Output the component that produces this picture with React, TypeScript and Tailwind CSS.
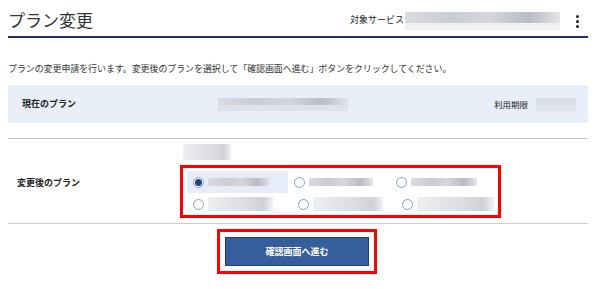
const blur = "bg-[linear-gradient(90deg,#d9dbe0_0%,#c9ccd3_30%,#d4d6dc_55%,#b9bcc4_80%,#e2e4e8_100%)]";
const blurLight = "bg-[linear-gradient(90deg,#eeeff1_0%,#e3e4e7_35%,#dcdde1_60%,#cfd1d5_85%,#f0f1f3_100%)]";

function Radio({ checked }: { checked?: boolean }) {
  return (
    <span className="flex h-[11px] w-[11px] shrink-0 items-center justify-center rounded-full border border-[#8aa0bf] bg-white">
      {checked && <span className="h-[7px] w-[7px] rounded-full bg-[#1e3f86]" />}
    </span>
  );
}

function Option({ checked, w, light }: { checked?: boolean; w: string; light?: boolean }) {
  return (
    <div
      className={`flex h-[22px] items-center gap-[4px] pl-[6px] pr-[4px] ${
        checked ? "bg-[#e6edf8]" : ""
      }`}
    >
      <Radio checked={checked} />
      <div className={`${light ? "h-[14px]" : "h-[8px]"} ${w} ${light ? blurLight : blur}`} />
    </div>
  );
}

export default function App() {
  return (
    <div className="h-[289px] w-[600px] bg-white pl-[8px] pr-[12px] font-['Noto_Sans_CJK_JP','Noto_Sans',sans-serif] text-[#222]">
      {/* === Header === */}
      <div className="flex h-[38px] items-start justify-between border-b-2 border-[#1c2f6b]">
        <h1 className="mt-[9px] text-[17px] leading-[22px] text-[#333]">プラン変更</h1>
        <div className="mt-[12px] flex items-start">
          <span className="mt-[2px] text-[9px] leading-[11px]">対象サービス</span>
          <div className="ml-[1px] flex flex-col">
            <div className={`h-[11px] w-[155px] ${blur}`} />
            <div className="h-[7px] w-[155px] bg-[#f1f2f4]" />
          </div>
          <div className="ml-[16px] mr-[9px] mt-[3px] flex flex-col gap-[2px]">
            <span className="h-[3px] w-[3px] rounded-full bg-[#222]" />
            <span className="h-[3px] w-[3px] rounded-full bg-[#222]" />
            <span className="h-[3px] w-[3px] rounded-full bg-[#222]" />
          </div>
        </div>
      </div>

      {/* === Intro === */}
      <p className="mt-[25px] text-[9px] leading-[12px] tracking-[-0.1px] text-[#333]">
        プランの変更申請を行います。変更後のプランを選択して「確認画面へ進む」ボタンをクリックしてください。
      </p>

      {/* === Current plan === */}
      <div className="mt-[10px] flex h-[38px] items-center bg-[#e9eff8] pl-[14px] pr-[12px]">
        <span className="w-[196px] text-[9px] font-bold">現在のプラン</span>
        <div className="flex flex-col">
          <div className={`h-[7px] w-[130px] ${blur}`} />
          <div className="h-[6px] w-[130px] bg-[#dde2ea]" />
        </div>
        <span className="ml-auto text-[8.5px]">利用期限</span>
        <div className="ml-[8px] flex flex-col">
          <div className="h-[7px] w-[40px] bg-[#d8dde5]" />
          <div className="h-[6px] w-[40px] bg-[#e0e5ed]" />
        </div>
      </div>

      {/* === New plan === */}
      <div className="mt-[15px] flex h-[86px] border-y border-t-[#b8c5d8] border-b-[#c9ced6]">
        <span className="mt-[37px] w-[172px] pl-[9px] text-[9px] font-bold">変更後のプラン</span>
        <div className="flex flex-col">
          <div className={`ml-[3px] mt-[5px] h-[16px] w-[48px] ${blurLight}`} />
          <div className="mt-[5px] h-[53px] w-[321px] border-[3px] border-[#f00] pl-[4px] pt-[3px]">
            <div className="flex">
              <div className="w-[101px]">
                <Option checked w="w-[62px]" />
              </div>
              <div className="w-[102px]">
                <Option w="w-[64px]" />
              </div>
              <Option w="w-[66px]" />
            </div>
            <div className="flex">
              <div className="w-[106px]">
                <Option light w="w-[65px]" />
              </div>
              <div className="w-[106px]">
                <Option light w="w-[70px]" />
              </div>
              <Option light w="w-[77px]" />
            </div>
          </div>
        </div>
      </div>

      {/* === Submit === */}
      <div className="mt-[5px] flex justify-center">
        <div className="mr-[2px] border-[3px] border-[#f00] px-[5px] py-[5px]">
          <button className="flex h-[29px] w-[144px] items-center justify-center border border-[#1d3d7e] bg-[#365d9c] text-[9px] font-bold text-white">
            確認画面へ進む
          </button>
        </div>
      </div>
    </div>
  );
}
